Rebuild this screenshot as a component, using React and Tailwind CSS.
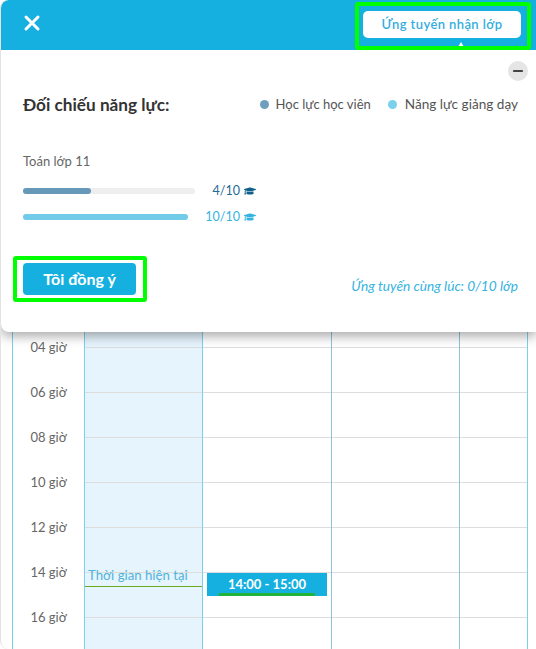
import React from "react";
import { X, Minus } from "lucide-react";
import { FaGraduationCap } from "react-icons/fa";

const hours = ["04 giờ", "06 giờ", "08 giờ", "10 giờ", "12 giờ", "14 giờ", "16 giờ"];

function SkillBar({ track, width, fill, label, labelColor, iconColor }) {
    return (
        <div className="flex items-center h-[20px]">
            <div className="w-[172px]">
                <div className={`h-[6px] rounded-full bg-[#eeeeee] ${track}`}>
                    <div className={`h-full rounded-full ${fill} ${width}`}></div>
                </div>
            </div>
            <span className={`w-[45px] text-right text-[12.5px] ${labelColor}`}>{label}</span>
            <FaGraduationCap className={`ml-[4px] text-[12px] ${iconColor}`} />
        </div>
    );
}

export default function App() {
    return (
        <div className="relative h-[649px] w-[536px] overflow-hidden bg-white rounded-l-[8px] border-l border-[#e3e3e3] font-['Lato','Noto_Sans',sans-serif] text-[#555555]">
            {/* calendar behind the panel */}
            <div className="ml-[11px] w-[516px] pt-[303px] h-[649px] flex border-x border-[#7bd0ee]">
                <div className="w-[72px] border-r border-[#7bd0ee]">
                    {hours.map((h) => (
                        <div key={h} className="h-[45px] flex items-end justify-center text-[13px] leading-[18px] translate-y-[8px] text-[#666666]">
                            {h}
                        </div>
                    ))}
                </div>
                <div className="w-[118px] border-r border-[#7bd0ee] bg-[#e6f4fd]">
                    {hours.map((h) => (
                        <div key={h} className="h-[45px] border-b border-[#dddddd] box-border"></div>
                    ))}
                </div>
                <div className="w-[129px] border-r border-[#8cc4dc]">
                    {hours.map((h) => (
                        <div key={h} className="h-[45px] border-b border-[#dddddd]"></div>
                    ))}
                </div>
                <div className="w-[128px] border-r border-[#8cc4dc]">
                    {hours.map((h) => (
                        <div key={h} className="h-[45px] border-b border-[#dddddd]"></div>
                    ))}
                </div>
                <div className="flex-1">
                    {hours.map((h) => (
                        <div key={h} className="h-[45px] border-b border-[#dddddd]"></div>
                    ))}
                </div>
            </div>

            {/* current time marker */}
            <div className="absolute left-[84px] top-[566px] w-[117px] h-[21px] border-b border-[#6aa920] pl-[3px] text-[13.2px] leading-[18px] text-[#4fb3dc]">
                Thời gian hiện tại
            </div>

            {/* slot */}
            <div className="absolute left-[206px] top-[573px] w-[120px] h-[23px] bg-[#15b0e0] flex justify-center">
                <span className="relative w-[96px] text-center text-[13px] font-bold leading-[23px] text-white">
                    14:00 - 15:00
                    <span className="absolute left-0 right-0 bottom-0 h-[3px] bg-[#22b33a]"></span>
                </span>
            </div>

            {/* panel */}
            <div className="absolute left-0 top-0 right-0 h-[332px] bg-white rounded-l-[8px] shadow-[0_4px_12px_rgba(0,0,0,0.35)] overflow-hidden">
                <div className="h-[50px] bg-[#15b0e0] flex items-center justify-between pl-[19px] pr-[15px]">
                    <X className="w-[24px] h-[24px] text-white -translate-y-[2px]" strokeWidth={3} />
                    <div className="relative w-[158px] h-[27px] rounded-[5px] bg-white text-center text-[13px] font-semibold leading-[27px] tracking-[0.4px] text-[#35aedd] -translate-y-[1px]">
                        Ứng tuyến nhận lớp
                        <span className="absolute left-[95px] top-[31px] border-x-[3px] border-b-[5px] border-x-transparent border-b-white"></span>
                    </div>
                </div>
                <div className="px-[22px] pt-[11px]">
                    <div className="flex justify-end">
                        <div className="w-[20px] h-[20px] -mr-[14px] rounded-full bg-[#e5e5e5] flex items-center justify-center">
                            <Minus className="w-[14px] h-[14px] text-[#444444]" strokeWidth={3.5} />
                        </div>
                    </div>
                    <div className="flex items-center justify-between mt-[10px]">
                        <div className="text-[17.2px] font-bold text-[#333333] mt-[1px]">Đối chiếu năng lực:</div>
                        <div className="flex items-center text-[13px] text-[#555555] -mr-[4px]">
                            <span className="w-[9px] h-[9px] rounded-full bg-[#6f9fbf] mr-[7px]"></span>
                            Học lực học viên
                            <span className="w-[9px] h-[9px] rounded-full bg-[#7ad1ec] ml-[17px] mr-[8px]"></span>
                            <span className="text-[13.6px]">Năng lực giảng dạy</span>
                        </div>
                    </div>
                    <div className="mt-[34px] text-[13px] text-[#666666]">Toán lớp 11</div>
                    <div className="mt-[10px] flex flex-col gap-[6px]">
                        <SkillBar track="w-[172px]" width="w-[68px]" fill="bg-[#6698b8]" label="4/10" labelColor="text-[#1f6a94]" iconColor="text-[#0f5f8a]" />
                        <SkillBar track="w-[165px]" width="w-[165px]" fill="bg-[#72cbe8]" label="10/10" labelColor="text-[#35b3e0]" iconColor="text-[#35b3e0]" />
                    </div>
                    <div className="mt-[34px] flex items-center justify-between">
                        <button className="w-[113px] h-[32px] rounded-[4px] bg-[#15b0e0] text-[16px] leading-[30px] font-bold text-white">
                            Tôi đồng ý
                        </button>
                        <div className="text-[13.7px] italic text-[#35b3e0] -mr-[4px] mt-[15px]">Ứng tuyến cùng lúc: 0/10 lớp</div>
                    </div>
                </div>
            </div>

            {/* green highlights around the two buttons */}
            <div className="absolute left-[354px] top-[2px] w-[176px] h-[48px] rounded-[3px] border-[4px] border-[#00ff00]"></div>
            <div className="absolute left-[12px] top-[256px] w-[134px] h-[46px] rounded-[3px] border-[4px] border-[#00ff00]"></div>
        </div>
    );
}
